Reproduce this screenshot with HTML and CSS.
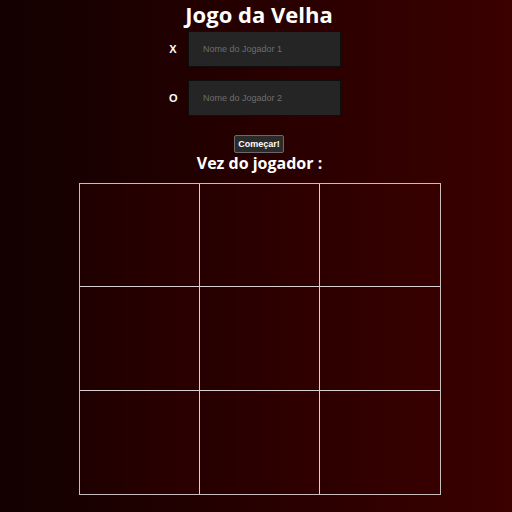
FILE: index.html
```html
<!DOCTYPE html>
<html>
<head>
<meta charset="utf-8">
<link rel="stylesheet" href="styles.css">
</head>
<body>
<main class="page">
  <h1 class="title">Jogo da Velha</h1>
  <div class="player">
    <span class="mark">X</span>
    <input class="name" type="text" placeholder="Nome do Jogador 1">
  </div>
  <div class="player second">
    <span class="mark">O</span>
    <input class="name" type="text" placeholder="Nome do Jogador 2">
  </div>
  <button class="start">Começar!</button>
  <h2 class="turn">Vez do jogador :</h2>
  <div class="board">
    <div class="cell"></div><div class="cell"></div><div class="cell"></div>
    <div class="cell"></div><div class="cell"></div><div class="cell"></div>
    <div class="cell"></div><div class="cell"></div><div class="cell"></div>
  </div>
</main>
</body>
</html>
```

FILE: styles.css
```css
html, body {
  margin: 0;
  height: 100%;
}
body {
  background: linear-gradient(to right, #130000 0%, #3b0000 100%);
  font-family: "Open Sans", "DejaVu Sans", sans-serif;
  color: #fff;
}
.page {
  display: flex;
  flex-direction: column;
  align-items: center;
}
.title {
  margin: 0 0 0 6px;
  font-size: 22px;
  line-height: 29px;
  font-weight: 700;
}
.player {
  display: flex;
  align-items: center;
  gap: 11px;
  margin: 2px 0 0 -2px;
}
.player.second {
  margin-top: 13px;
}
.mark {
  width: 8px;
  font-family: "Liberation Sans", Arial, sans-serif;
  font-size: 11px;
  font-weight: 700;
  text-align: center;
}
.name {
  box-sizing: border-box;
  width: 153px;
  height: 36px;
  background: #252525;
  border: 1px solid #0e0e0e;
  padding: 0 0 0 14px;
  font-family: "Liberation Sans", Arial, sans-serif;
  font-size: 9px;
  color: #ddd;
  outline: none;
}
.name::placeholder {
  color: #6d6d6d;
}
.start {
  margin: 19px 0 0 6px;
  box-sizing: border-box;
  width: 50px;
  height: 18px;
  padding: 0;
  background: #2b2b2b;
  border: 1px solid #6a6a6a;
  border-radius: 2px;
  color: #fff;
  font-family: "Liberation Sans", Arial, sans-serif;
  font-size: 9px;
  font-weight: 700;
}
.turn {
  margin: 0 0 0 7px;
  font-size: 16px;
  line-height: 20px;
  font-weight: 700;
}
.board {
  margin: 10px 0 0 7px;
  display: grid;
  grid-template-columns: 119px 119px 120px;
  grid-template-rows: 102px 103px 103px;
  gap: 1px;
  background: #d8d0d0;
  border: 1px solid #c9bcbc;
}
.cell {
  background: linear-gradient(to right, #1f0000, #2c0000);
}
.cell:nth-child(3n+2) {
  background: linear-gradient(to right, #260000, #310000);
}
.cell:nth-child(3n) {
  background: linear-gradient(to right, #2d0000, #380000);
}
```
